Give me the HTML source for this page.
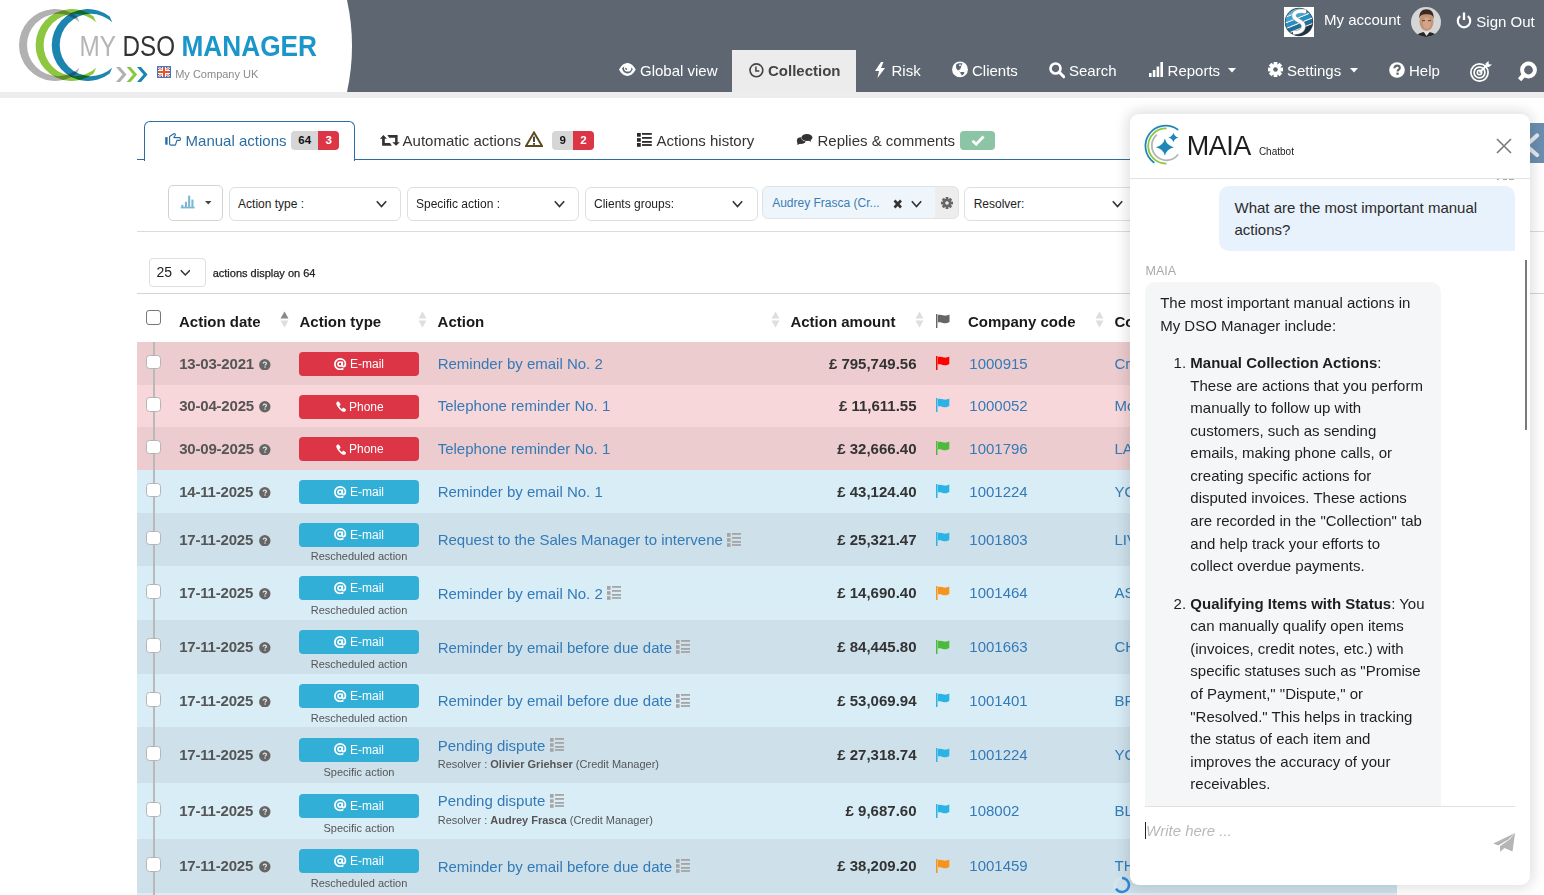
<!DOCTYPE html><html><head><meta charset="utf-8"><style>
html,body{margin:0;padding:0;width:1544px;height:895px;overflow:hidden;background:#fff;font-family:"Liberation Sans",sans-serif;}
.a{position:absolute;display:block;}
.t{position:absolute;white-space:nowrap;}
</style></head><body>
<div class="a" style="left:0.00px;top:0.00px;width:1544.00px;height:92.00px;background:#5e6771;"></div>
<svg class="a" style="left:0.00px;top:0.00px;" width="360" height="92" viewBox="0 0 360 92"><path d="M0 0 H347 Q357 46 347 92 H0 Z" fill="#fff"/></svg>
<div class="a" style="left:0.00px;top:92.00px;width:1544.00px;height:6.00px;background:#ededed;"></div>
<div class="a" style="left:732.00px;top:50.00px;width:124.00px;height:42.00px;background:#ececec;"></div>
<svg class="a" style="left:0.00px;top:0.00px;" width="340" height="92" viewBox="0 0 340 92"><path d="M77.00 16.50 A36 36 0 1 0 77.00 73.50 L79.50 67.71 A31.16 31.16 0 1 1 79.50 22.29 Z" fill="#b1b1b1" style="mix-blend-mode:multiply"/><path d="M93.60 16.50 A36 36 0 1 0 93.60 73.50 L96.10 67.71 A31.16 31.16 0 1 1 96.10 22.29 Z" fill="#8dc63f" style="mix-blend-mode:multiply"/><path d="M109.70 16.50 A36 36 0 1 0 109.70 73.50 L112.20 67.71 A31.16 31.16 0 1 1 112.20 22.29 Z" fill="#1b85b0" style="mix-blend-mode:multiply"/><path d="M116 67 L120 67 L126.5 74.5 L120 82 L116 82 L122.5 74.5 Z" fill="#b1b1b1"/><path d="M126.6 67 L130.6 67 L137.1 74.5 L130.6 82 L126.6 82 L133.1 74.5 Z" fill="#8dc63f"/><path d="M137 67 L141 67 L147.5 74.5 L141 82 L137 82 L143.5 74.5 Z" fill="#1b85b0"/><text x="79.5" y="56" font-family="Liberation Sans" font-size="29" fill="#b5b5b5" textLength="36.5" lengthAdjust="spacingAndGlyphs">MY</text><text x="122.5" y="56" font-family="Liberation Sans" font-size="29" fill="#333" textLength="52.5" lengthAdjust="spacingAndGlyphs">DSO</text><text x="181.5" y="56" font-family="Liberation Sans" font-size="29" font-weight="700" fill="#1b96c8" textLength="135.5" lengthAdjust="spacingAndGlyphs">MANAGER</text></svg>
<svg class="a" style="left:157.00px;top:66.00px;" width="14" height="12" viewBox="0 0 14 12"><rect width="14" height="12" fill="#2d5fb8"/><path d="M0 0L14 12M14 0L0 12" stroke="#fff" stroke-width="2.4"/><path d="M0 0L14 12M14 0L0 12" stroke="#e8542a" stroke-width="1"/><path d="M7 0V12M0 6H14" stroke="#fff" stroke-width="4"/><path d="M7 0V12M0 6H14" stroke="#e8542a" stroke-width="2"/><rect x="0.5" y="0.5" width="13" height="11" fill="none" stroke="#3a78c8" stroke-width="1"/></svg>
<div class="t" style="left:175.20px;top:67.19px;font-size:11px;line-height:14px;color:#8a8a8a;">My Company UK</div>
<svg class="a" style="left:614.00px;top:58.00px;" width="30" height="24" viewBox="0 0 30 24"><path d="M5 11.6 C7.4 7 10.4 5 13.3 5 C16.2 5 19.3 7 21.7 11.6 C19.3 16.2 16.2 18 13.3 18 C10.4 18 7.4 16.2 5 11.6 Z" fill="#fff"/><path d="M8 10.6 C9.5 8.6 11 8 13.3 8 C15.6 8 17.3 8.8 18.8 11.2 C17.6 14 15.6 15.5 13.3 15.5 C11 15.5 9 14 8 10.6 Z" fill="#5e6771"/><circle cx="13.7" cy="9.9" r="3.7" fill="#fff"/><ellipse cx="12.1" cy="10.9" rx="0.8" ry="1.2" fill="#5e6771" transform="rotate(-30 12.1 10.9)"/></svg>
<div class="t" style="left:640.00px;top:60.80px;font-size:15px;line-height:20px;color:#fff;">Global view</div>
<svg class="a" style="left:748.50px;top:62.50px;" width="15" height="15" viewBox="0 0 15 15"><circle cx="7.4" cy="7.3" r="6.4" fill="none" stroke="#444" stroke-width="1.6"/><path d="M6.9 3.6 V8 H10.3" fill="none" stroke="#444" stroke-width="1.5"/></svg>
<div class="t" style="left:768.00px;top:60.80px;font-size:15px;line-height:20px;color:#444;font-weight:700;">Collection</div>
<svg class="a" style="left:873.50px;top:62.00px;" width="12" height="16" viewBox="0 0 12 16"><path d="M7 0 L1 9 H5 L3.5 16 L11 6 H7 L9.5 0 Z" fill="#fff"/></svg>
<div class="t" style="left:891.50px;top:60.80px;font-size:15px;line-height:20px;color:#fff;">Risk</div>
<svg class="a" style="left:945.00px;top:58.00px;" width="30" height="24" viewBox="0 0 30 24"><circle cx="15" cy="11.4" r="7.9" fill="#fff"/><path d="M11.2 6.6 C12.5 5.4 14.5 5 17.6 5.4 C17.2 6.6 16.6 7.2 16.1 8.4 C15.8 9.6 15.6 10.8 14.9 11.6 C14.2 11.8 13.6 11.9 13.3 12.6 C12.6 12.2 11.4 11.2 11.1 9.8 C11 8.6 11 7.4 11.2 6.6 Z" fill="#5e6771"/><path d="M14 6.6 C15 6.4 16 6.6 16.8 6.9 C16 7.5 15.2 7.8 14.4 8.2 Z" fill="#fff"/><path d="M13.3 12.6 L14.6 13.6 L15.2 14.2 C16.8 14 18.4 14 19.6 14.4 C19.2 15.6 18.2 16.6 16.9 17.6 C16.2 16.6 15.8 15.6 15.3 14.8 Z" fill="#5e6771"/></svg>
<div class="t" style="left:972.00px;top:60.80px;font-size:15px;line-height:20px;color:#fff;">Clients</div>
<svg class="a" style="left:1049.00px;top:62.00px;" width="16" height="17" viewBox="0 0 16 17"><circle cx="6.5" cy="6.5" r="5" fill="none" stroke="#fff" stroke-width="2.6"/><path d="M10 10 L14.8 14.8" stroke="#fff" stroke-width="3" stroke-linecap="round"/></svg>
<div class="t" style="left:1069.00px;top:60.80px;font-size:15px;line-height:20px;color:#fff;">Search</div>
<svg class="a" style="left:1149.00px;top:62.00px;" width="14" height="15" viewBox="0 0 14 15"><rect x="0" y="11" width="2.6" height="4" fill="#fff"/><rect x="3.8" y="8" width="2.6" height="7" fill="#fff"/><rect x="7.6" y="4.5" width="2.6" height="10.5" fill="#fff"/><rect x="11.4" y="0" width="2.6" height="15" fill="#fff"/></svg>
<div class="t" style="left:1167.60px;top:60.80px;font-size:15px;line-height:20px;color:#fff;">Reports</div>
<svg class="a" style="left:1228.00px;top:68.20px;" width="8" height="5" viewBox="0 0 8 5"><path d="M0 0H8L4 4.5Z" fill="#fff"/></svg>
<svg class="a" style="left:1268.00px;top:61.60px;" width="15" height="15" viewBox="0 0 15 15"><g transform="translate(7.5 7.5)"><rect x="-1.9" y="-7.6" width="3.8" height="4" fill="#fff" transform="rotate(0)"/><rect x="-1.9" y="-7.6" width="3.8" height="4" fill="#fff" transform="rotate(45)"/><rect x="-1.9" y="-7.6" width="3.8" height="4" fill="#fff" transform="rotate(90)"/><rect x="-1.9" y="-7.6" width="3.8" height="4" fill="#fff" transform="rotate(135)"/><rect x="-1.9" y="-7.6" width="3.8" height="4" fill="#fff" transform="rotate(180)"/><rect x="-1.9" y="-7.6" width="3.8" height="4" fill="#fff" transform="rotate(225)"/><rect x="-1.9" y="-7.6" width="3.8" height="4" fill="#fff" transform="rotate(270)"/><rect x="-1.9" y="-7.6" width="3.8" height="4" fill="#fff" transform="rotate(315)"/><circle r="5.4" fill="#fff"/><circle r="2.3" fill="#5e6771"/></g></svg>
<div class="t" style="left:1287.00px;top:60.80px;font-size:15px;line-height:20px;color:#fff;">Settings</div>
<svg class="a" style="left:1349.50px;top:68.20px;" width="8" height="5" viewBox="0 0 8 5"><path d="M0 0H8L4 4.5Z" fill="#fff"/></svg>
<svg class="a" style="left:1389.00px;top:62.00px;" width="16" height="16" viewBox="0 0 16 16"><circle cx="8" cy="8" r="7.8" fill="#fff"/><path d="M5.4 6.2 C5.4 4.4 6.6 3.6 8.1 3.6 C9.7 3.6 10.8 4.6 10.8 5.9 C10.8 7.6 8.6 7.7 8.6 9.4" fill="none" stroke="#5e6771" stroke-width="2.1"/><rect x="7.4" y="10.6" width="2.3" height="2.2" fill="#5e6771"/></svg>
<div class="t" style="left:1409.00px;top:60.80px;font-size:15px;line-height:20px;color:#fff;">Help</div>
<svg class="a" style="left:1469.50px;top:61.00px;" width="22" height="21" viewBox="0 0 22 21"><circle cx="9.5" cy="11.5" r="8.6" fill="none" stroke="#fff" stroke-width="1.7"/><circle cx="9.5" cy="11.5" r="5.4" fill="none" stroke="#fff" stroke-width="1.7"/><circle cx="9.5" cy="11.5" r="2.2" fill="none" stroke="#fff" stroke-width="1.5"/><path d="M9.5 11.5 L18 3" stroke="#fff" stroke-width="1.8"/><path d="M15.5 2.5 L18.5 0 L18.8 3.2 L22 3.5 L19 6 L15.8 5.7 Z" fill="#fff"/></svg>
<svg class="a" style="left:1516.00px;top:60.00px;" width="23" height="23" viewBox="0 0 23 23"><circle cx="12.5" cy="10" r="6.4" fill="none" stroke="#fff" stroke-width="4"/><path d="M8 14.8 L3.6 19.8" stroke="#fff" stroke-width="4.4" stroke-linecap="butt"/></svg>
<svg class="a" style="left:1284.00px;top:7.00px;" width="30" height="30" viewBox="0 0 30 30"><rect width="30" height="30" fill="#fff"/><defs><clipPath id="cc"><circle cx="15" cy="15" r="13.4"/></clipPath></defs><circle cx="15" cy="15" r="14.2" fill="#3a3f45"/><g clip-path="url(#cc)"><g transform="rotate(-22 15 15)"><rect x="-10" y="-5" width="50" height="10" fill="#47b6e4"/><rect x="-10" y="5" width="50" height="1.3" fill="#eaf6fb"/><rect x="-10" y="6.3" width="50" height="4" fill="#34a6da"/><rect x="-10" y="10.3" width="50" height="1.3" fill="#eaf6fb"/><rect x="-10" y="11.6" width="50" height="4" fill="#2590c6"/><rect x="-10" y="15.6" width="50" height="1.3" fill="#eaf6fb"/><rect x="-10" y="16.9" width="50" height="4" fill="#1f6f9c"/><rect x="-10" y="20.9" width="50" height="1.3" fill="#eaf6fb"/><rect x="-10" y="22.2" width="50" height="20" fill="#1c3446"/></g></g><path d="M22 4.5 C15 3 9 5 10 9.5 C11 13.5 19.5 14 19.5 19 C19.5 23.5 15 26 9 25.5" fill="none" stroke="#9aa3aa" stroke-width="4.6"/><path d="M22 4.5 C15 3 9 5 10 9.5 C11 13.5 19.5 14 19.5 19 C19.5 23.5 15 26 9 25.5" fill="none" stroke="#fff" stroke-width="3.4"/></svg>
<div class="t" style="left:1324.00px;top:10.20px;font-size:15px;line-height:20px;color:#fff;">My account</div>
<svg class="a" style="left:1411.00px;top:7.00px;" width="30" height="30" viewBox="0 0 30 30"><defs><clipPath id="av"><circle cx="15" cy="15" r="15"/></clipPath></defs><g clip-path="url(#av)"><rect width="30" height="30" fill="#d6d6d6"/><path d="M5 30 C6 26.5 10 25 15.5 25 C21 25 25 26.5 26 30Z" fill="#262626"/><path d="M12.5 24.5 L15.5 29 L19 24.5Z" fill="#e6e6e6"/><ellipse cx="15.5" cy="14.5" rx="7" ry="9.5" fill="#c39478"/><ellipse cx="15.8" cy="16" rx="4" ry="6" fill="#d2a58a"/><path d="M8.3 12 C8 5 11 2.3 15.5 2.3 C20 2.3 23 5 22.7 12 C21.8 8.5 20.5 7.2 15.5 7.2 C10.5 7.2 9.2 8.5 8.3 12Z" fill="#3b2a22"/><rect x="11" y="13" width="3" height="1.2" fill="#6b4a3a"/><rect x="17" y="13" width="3" height="1.2" fill="#6b4a3a"/></g></svg>
<svg class="a" style="left:1456.00px;top:12.00px;" width="16" height="17" viewBox="0 0 16 17"><path d="M4.2 4.2 A6.2 6.2 0 1 0 11.8 4.2" fill="none" stroke="#fff" stroke-width="2.2"/><path d="M8 0.5 V8" stroke="#fff" stroke-width="2.4"/></svg>
<div class="t" style="left:1476.30px;top:12.20px;font-size:15px;line-height:20px;color:#fff;">Sign Out</div>
<div class="a" style="left:137.00px;top:159.00px;width:1407.00px;height:1.00px;background:#2e6da4;"></div>
<div class="a" style="left:144px;top:121px;width:209px;height:39px;border:1px solid #2e6da4;border-bottom:none;border-radius:6px 6px 0 0;background:#fff;"></div>
<svg class="a" style="left:161.00px;top:128.00px;" width="24" height="22" viewBox="0 0 24 22"><rect x="4.2" y="9.1" width="2.4" height="7.6" fill="#2e6da4"/><path d="M8.6 8.6 L13.2 5.6 C13.8 5.4 14.5 6 14.4 6.8 L12.9 9.6 H18.6 C19.7 9.6 19.7 12.3 18.6 12.3 H15.9 L14.4 17.1 H9.9 C9.1 17.1 8.6 16.5 8.6 15.7 Z" fill="none" stroke="#2e6da4" stroke-width="1.15" stroke-linejoin="round"/></svg>
<div class="t" style="left:185.60px;top:130.55px;font-size:15px;line-height:20px;color:#2e6da4;">Manual actions</div>
<div class="a" style="left:291px;top:131px;width:27px;height:19px;background:#d6d6d6;border-radius:4px 0 0 4px;"></div>
<div class="a" style="left:318px;top:131px;width:21px;height:19px;background:#dc3545;border-radius:0 4px 4px 0;"></div>
<div class="t" style="left:298.30px;top:133.32px;font-size:11.5px;line-height:15px;color:#111;font-weight:700;">64</div>
<div class="t" style="left:325.40px;top:133.32px;font-size:11.5px;line-height:15px;color:#fff;font-weight:700;">3</div>
<svg class="a" style="left:376.00px;top:128.00px;" width="28" height="22" viewBox="0 0 28 22"><path d="M3.9 10.7 L7.4 6.9 L10.9 10.7 H8.8 V15 H14 L15.9 17.7 H6.1 V10.7 Z" fill="#333"/><path d="M11.3 7.1 H21.6 V14.3 H23.8 L20.1 17.7 L16.2 14.3 H19.1 V9.8 H13.2 Z" fill="#333"/></svg>
<div class="t" style="left:402.60px;top:130.55px;font-size:15px;line-height:20px;color:#333;">Automatic actions</div>
<svg class="a" style="left:525.00px;top:131.00px;" width="18" height="16" viewBox="0 0 18 16"><path d="M9 1.5 L17 15 H1 Z" fill="#fff" stroke="#5a4a1c" stroke-width="1.9" stroke-linejoin="miter"/><rect x="8.1" y="5.6" width="1.8" height="5.4" fill="#333"/><rect x="8.1" y="12" width="1.8" height="1.8" fill="#333"/></svg>
<div class="a" style="left:552px;top:131px;width:21px;height:19px;background:#d6d6d6;border-radius:4px 0 0 4px;"></div>
<div class="a" style="left:573px;top:131px;width:21px;height:19px;background:#dc3545;border-radius:0 4px 4px 0;"></div>
<div class="t" style="left:559.50px;top:133.32px;font-size:11.5px;line-height:15px;color:#111;font-weight:700;">9</div>
<div class="t" style="left:580.30px;top:133.32px;font-size:11.5px;line-height:15px;color:#fff;font-weight:700;">2</div>
<svg class="a" style="left:637.00px;top:133.00px;" width="15" height="14" viewBox="0 0 15 14"><rect x="0" y="0" width="3.8" height="3.7" fill="#2a2a2a"/><rect x="0" y="5.1" width="3.8" height="3.7" fill="#2a2a2a"/><rect x="0" y="10" width="3.8" height="3.8" fill="#2a2a2a"/><rect x="5" y="0" width="9.8" height="1.8" fill="#2a2a2a"/><rect x="5" y="4" width="9.8" height="1.8" fill="#2a2a2a"/><rect x="5" y="8" width="9.8" height="1.8" fill="#2a2a2a"/><rect x="5" y="11.1" width="9.8" height="1.8" fill="#2a2a2a"/></svg>
<div class="t" style="left:656.60px;top:130.55px;font-size:15px;line-height:20px;color:#333;">Actions history</div>
<svg class="a" style="left:793.00px;top:128.00px;" width="24" height="22" viewBox="0 0 24 22"><ellipse cx="8.3" cy="12.6" rx="4.4" ry="3.3" fill="#333"/><path d="M4.4 13.2 L4.4 17 L8 15.2 Z" fill="#333"/><ellipse cx="13.9" cy="9.5" rx="5.9" ry="4" fill="#fff"/><ellipse cx="13.9" cy="9.5" rx="5.5" ry="3.6" fill="#333"/><path d="M15.5 12.2 L17.6 14 L17.8 11.5 Z" fill="#333"/></svg>
<div class="t" style="left:817.50px;top:130.55px;font-size:15px;line-height:20px;color:#333;">Replies &amp; comments</div>
<div class="a" style="left:960px;top:131px;width:35px;height:18.5px;background:#8cc5a5;border-radius:4px;"></div>
<svg class="a" style="left:970.50px;top:135.00px;" width="14" height="11" viewBox="0 0 14 11"><path d="M1.5 5.8 L5.2 9.2 L12.6 1.6" fill="none" stroke="#fff" stroke-width="2.8"/></svg>
<div class="a" style="left:168.2px;top:185.3px;width:52.4px;height:33.5px;border:1px solid #d2d2d2;border-radius:5px;background:#fff;"></div>
<svg class="a" style="left:180.00px;top:194.50px;" width="16" height="14" viewBox="0 0 16 14"><rect x="1.3" y="9.8" width="2.1" height="2.6" fill="#7db7d2"/><rect x="4.9" y="6.8" width="2.1" height="5.6" fill="#7db7d2"/><rect x="8.1" y="0.6" width="2.1" height="11.8" fill="#7db7d2"/><rect x="11.4" y="4.6" width="2.1" height="7.8" fill="#7db7d2"/><rect x="0.7" y="11.8" width="14" height="1.6" fill="#7db7d2"/></svg>
<svg class="a" style="left:205.00px;top:201.00px;" width="6.5" height="3.5" viewBox="0 0 6.5 3.5"><path d="M0 0H6.5L3.25 3.5Z" fill="#444"/></svg>
<div class="a" style="left:228.6px;top:187.2px;width:170.8px;height:31.4px;border:1px solid #dcdfe3;border-radius:6px;background:#fff;"></div>
<div class="t" style="left:238.10px;top:195.64px;font-size:12px;line-height:16px;color:#222;">Action type :</div>
<svg class="a" style="left:375.60px;top:200.00px;" width="11" height="8.5" viewBox="0 0 11 8.5"><path d="M0.8 1.2 L5.5 6.5 L10.2 1.2" fill="none" stroke="#333" stroke-width="1.6"/></svg>
<div class="a" style="left:406.5px;top:187.2px;width:170.7px;height:31.4px;border:1px solid #dcdfe3;border-radius:6px;background:#fff;"></div>
<div class="t" style="left:416.00px;top:195.64px;font-size:12px;line-height:16px;color:#222;">Specific action :</div>
<svg class="a" style="left:553.80px;top:200.00px;" width="11" height="8.5" viewBox="0 0 11 8.5"><path d="M0.8 1.2 L5.5 6.5 L10.2 1.2" fill="none" stroke="#333" stroke-width="1.6"/></svg>
<div class="a" style="left:584.5px;top:187.2px;width:171.3px;height:31.4px;border:1px solid #dcdfe3;border-radius:6px;background:#fff;"></div>
<div class="t" style="left:594.00px;top:195.64px;font-size:12px;line-height:16px;color:#222;">Clients groups:</div>
<svg class="a" style="left:732.40px;top:200.00px;" width="11" height="8.5" viewBox="0 0 11 8.5"><path d="M0.8 1.2 L5.5 6.5 L10.2 1.2" fill="none" stroke="#333" stroke-width="1.6"/></svg>
<div class="a" style="left:762.4px;top:186.2px;width:194.4px;height:31.2px;border:1px solid #dfe3e7;border-radius:6px;background:#ededed;"></div>
<div class="a" style="left:763.4px;top:187.2px;width:171.3px;height:31.2px;border-radius:5px 0 0 5px;background:#eef6fb;"></div>
<div class="t" style="left:772.20px;top:195.14px;font-size:12px;line-height:16px;color:#3a7db5;">Audrey Frasca (Cr...</div>
<svg class="a" style="left:892.50px;top:198.50px;" width="9.5" height="10" viewBox="0 0 9.5 10"><path d="M1.5 1.5 L8 8.5 M8 1.5 L1.5 8.5" stroke="#333" stroke-width="2.6"/></svg>
<svg class="a" style="left:910.50px;top:199.50px;" width="11" height="8.5" viewBox="0 0 11 8.5"><path d="M0.8 1.2 L5.5 6.5 L10.2 1.2" fill="none" stroke="#333" stroke-width="1.6"/></svg>
<svg class="a" style="left:940.50px;top:196.70px;" width="12" height="12" viewBox="0 0 12 12"><g transform="translate(6 6)"><rect x="-1.4" y="-6" width="2.8" height="3" fill="#666" transform="rotate(0)"/><rect x="-1.4" y="-6" width="2.8" height="3" fill="#666" transform="rotate(45)"/><rect x="-1.4" y="-6" width="2.8" height="3" fill="#666" transform="rotate(90)"/><rect x="-1.4" y="-6" width="2.8" height="3" fill="#666" transform="rotate(135)"/><rect x="-1.4" y="-6" width="2.8" height="3" fill="#666" transform="rotate(180)"/><rect x="-1.4" y="-6" width="2.8" height="3" fill="#666" transform="rotate(225)"/><rect x="-1.4" y="-6" width="2.8" height="3" fill="#666" transform="rotate(270)"/><rect x="-1.4" y="-6" width="2.8" height="3" fill="#666" transform="rotate(315)"/><circle r="4.2" fill="#666"/><circle r="1.8" fill="#ededed"/></g></svg>
<div class="a" style="left:964.2px;top:187.4px;width:188px;height:31.200000000000003px;border:1px solid #dcdfe3;border-radius:6px;background:#fff;"></div>
<div class="t" style="left:973.70px;top:195.64px;font-size:12px;line-height:16px;color:#222;">Resolver:</div>
<svg class="a" style="left:1111.80px;top:200.00px;" width="11" height="8.5" viewBox="0 0 11 8.5"><path d="M0.8 1.2 L5.5 6.5 L10.2 1.2" fill="none" stroke="#333" stroke-width="1.6"/></svg>
<div class="a" style="left:137.00px;top:231.00px;width:1407.00px;height:1.20px;background:#dcdcdc;"></div>
<div class="a" style="left:148.6px;top:258px;width:55px;height:26.7px;border:1px solid #dcdfe3;border-radius:4px;background:#fff;"></div>
<div class="t" style="left:156.40px;top:262.85px;font-size:14px;line-height:18px;color:#222;">25</div>
<svg class="a" style="left:179.70px;top:268.50px;" width="10.7" height="8" viewBox="0 0 10.7 8"><path d="M0.8 1.2 L5.35 6 L9.899999999999999 1.2" fill="none" stroke="#333" stroke-width="1.5"/></svg>
<div class="t" style="left:212.70px;top:265.89px;font-size:11px;line-height:14px;color:#222;-webkit-text-stroke:0.25px #222;">actions display on 64</div>
<div class="a" style="left:137.00px;top:293.00px;width:1407.00px;height:1.20px;background:#d5d5d5;"></div>
<div class="a" style="left:146.4px;top:310.4px;width:12.6px;height:12.6px;border:1px solid #767676;border-radius:3px;background:#fff;"></div>
<div class="t" style="left:179.00px;top:311.80px;font-size:15px;line-height:20px;color:#1a1a1a;font-weight:700;">Action date</div>
<svg class="a" style="left:280.00px;top:311.00px;" width="9" height="17" viewBox="0 0 9 17"><path d="M0.5 7.5 L4.5 0.5 L8.5 7.5Z" fill="#8a8a8a"/><path d="M0.5 9.5 L4.5 16.5 L8.5 9.5Z" fill="#dedede"/></svg>
<div class="t" style="left:299.50px;top:311.80px;font-size:15px;line-height:20px;color:#1a1a1a;font-weight:700;">Action type</div>
<svg class="a" style="left:418.00px;top:311.00px;" width="9" height="17" viewBox="0 0 9 17"><path d="M0.5 7.5 L4.5 0.5 L8.5 7.5Z" fill="#dedede"/><path d="M0.5 9.5 L4.5 16.5 L8.5 9.5Z" fill="#dedede"/></svg>
<div class="t" style="left:437.60px;top:311.80px;font-size:15px;line-height:20px;color:#1a1a1a;font-weight:700;">Action</div>
<svg class="a" style="left:771.00px;top:311.00px;" width="9" height="17" viewBox="0 0 9 17"><path d="M0.5 7.5 L4.5 0.5 L8.5 7.5Z" fill="#dedede"/><path d="M0.5 9.5 L4.5 16.5 L8.5 9.5Z" fill="#dedede"/></svg>
<div class="t" style="left:790.40px;top:311.80px;font-size:15px;line-height:20px;color:#1a1a1a;font-weight:700;">Action amount</div>
<svg class="a" style="left:915.40px;top:311.00px;" width="9" height="17" viewBox="0 0 9 17"><path d="M0.5 7.5 L4.5 0.5 L8.5 7.5Z" fill="#dedede"/><path d="M0.5 9.5 L4.5 16.5 L8.5 9.5Z" fill="#dedede"/></svg>
<svg class="a" style="left:935.50px;top:314.00px;" width="14" height="14" viewBox="0 0 14 14"><rect x="0" y="0" width="1.4" height="14" fill="#666"/><path d="M1.8 1.2 C4 0 6 1.2 8 1.6 C10 2 11.5 1.2 13.5 0.6 V8 C11.5 8.8 10 9.6 8 9.2 C6 8.8 4 7.6 1.8 8.6 Z" fill="#666"/></svg>
<div class="t" style="left:968.00px;top:311.80px;font-size:15px;line-height:20px;color:#1a1a1a;font-weight:700;">Company code</div>
<svg class="a" style="left:1095.00px;top:311.00px;" width="9" height="17" viewBox="0 0 9 17"><path d="M0.5 7.5 L4.5 0.5 L8.5 7.5Z" fill="#dedede"/><path d="M0.5 9.5 L4.5 16.5 L8.5 9.5Z" fill="#dedede"/></svg>
<div class="t" style="left:1114.50px;top:311.80px;font-size:15px;line-height:20px;color:#1a1a1a;font-weight:700;">Company name</div>
<div class="a" style="left:137.00px;top:342.20px;width:1260.00px;height:42.40px;background:#eccccf;"></div>
<div class="a" style="left:137.00px;top:384.60px;width:1260.00px;height:42.40px;background:#f8d7da;"></div>
<div class="a" style="left:137.00px;top:427.00px;width:1260.00px;height:42.70px;background:#eccccf;"></div>
<div class="a" style="left:137.00px;top:469.70px;width:1260.00px;height:43.00px;background:#d9edf7;"></div>
<div class="a" style="left:137.00px;top:512.70px;width:1260.00px;height:53.40px;background:#cee1eb;"></div>
<div class="a" style="left:137.00px;top:566.10px;width:1260.00px;height:53.90px;background:#d9edf7;"></div>
<div class="a" style="left:137.00px;top:620.00px;width:1260.00px;height:54.00px;background:#cee1eb;"></div>
<div class="a" style="left:137.00px;top:674.00px;width:1260.00px;height:53.20px;background:#d9edf7;"></div>
<div class="a" style="left:137.00px;top:727.20px;width:1260.00px;height:55.70px;background:#cee1eb;"></div>
<div class="a" style="left:137.00px;top:782.90px;width:1260.00px;height:56.20px;background:#d9edf7;"></div>
<div class="a" style="left:137.00px;top:839.10px;width:1260.00px;height:53.60px;background:#cee1eb;"></div>
<div class="a" style="left:137.00px;top:892.70px;width:1260.00px;height:50.00px;background:#d9edf7;"></div>
<div class="a" style="left:153.20px;top:342.20px;width:1.80px;height:552.80px;background:#b9b9b9;"></div>
<div class="a" style="left:146.2px;top:354.80px;width:12.6px;height:12.6px;border:1px solid #b5b5b5;border-radius:3.5px;background:#fff;"></div>
<div class="t" style="left:179.20px;top:353.70px;font-size:15px;line-height:20px;color:#555;font-weight:700;letter-spacing:-0.2px;">13-03-2021</div>
<svg class="a" style="left:259.20px;top:358.70px;" width="11.6" height="11.6" viewBox="0 0 11.6 11.6"><circle cx="5.8" cy="5.8" r="5.7" fill="#666"/><path d="M4.2 4.6 C4.2 3.7 4.9 3.2 5.8 3.2 C6.8 3.2 7.4 3.8 7.4 4.5 C7.4 5.5 6.1 5.6 6.1 6.6" fill="none" stroke="#e8e8e8" stroke-width="1.2"/><rect x="5.4" y="7.4" width="1.3" height="1.3" fill="#e8e8e8"/></svg>
<div class="a" style="left:299px;top:352.10px;width:120px;height:24px;background:#dc3545;border-radius:4px;"></div>
<svg class="a" style="left:334.20px;top:357.70px;" width="12.5" height="12.5" viewBox="0 0 12.5 12.5"><path d="M9.4 10.6 C8.4 11.2 7.3 11.4 6.2 11.4 C3.2 11.4 0.9 9.1 0.9 6.2 C0.9 3.2 3.2 0.9 6.2 0.9 C9.2 0.9 11.4 3 11.4 5.8 C11.4 7.4 10.7 8.6 9.5 8.6 C8.6 8.6 8.3 8 8.3 7.2 V3.6" fill="none" stroke="#fff" stroke-width="1.7"/><circle cx="6.1" cy="6.1" r="2.1" fill="none" stroke="#fff" stroke-width="1.7"/></svg>
<div class="t" style="left:350.00px;top:356.24px;font-size:12px;line-height:16px;color:#fff;">E-mail</div>
<div class="t" style="left:437.70px;top:353.80px;font-size:15px;line-height:20px;color:#337ab7;">Reminder by email No. 2</div>
<div class="t" style="left:716.50px;width:200px;text-align:right;top:353.80px;font-size:15px;line-height:20px;color:#333;font-weight:700;">£ 795,749.56</div>
<svg class="a" style="left:935.70px;top:356.00px;" width="14" height="14" viewBox="0 0 14 14"><rect x="0" y="0" width="1.5" height="14" fill="#ff0000"/><path d="M1.9 1.2 C4 0 6 1.2 8 1.6 C10 2 11.5 1.2 13.3 0.6 V8 C11.5 8.8 10 9.6 8 9.2 C6 8.8 4 7.6 1.9 8.6 Z" fill="#ff0000"/></svg>
<div class="t" style="left:969.30px;top:353.80px;font-size:15px;line-height:20px;color:#337ab7;">1000915</div>
<div class="t" style="left:1114.50px;top:353.80px;font-size:15px;line-height:20px;color:#337ab7;">CrMPANY LTD</div>
<div class="a" style="left:146.2px;top:397.20px;width:12.6px;height:12.6px;border:1px solid #b5b5b5;border-radius:3.5px;background:#fff;"></div>
<div class="t" style="left:179.20px;top:396.10px;font-size:15px;line-height:20px;color:#555;font-weight:700;letter-spacing:-0.2px;">30-04-2025</div>
<svg class="a" style="left:259.20px;top:401.10px;" width="11.6" height="11.6" viewBox="0 0 11.6 11.6"><circle cx="5.8" cy="5.8" r="5.7" fill="#666"/><path d="M4.2 4.6 C4.2 3.7 4.9 3.2 5.8 3.2 C6.8 3.2 7.4 3.8 7.4 4.5 C7.4 5.5 6.1 5.6 6.1 6.6" fill="none" stroke="#e8e8e8" stroke-width="1.2"/><rect x="5.4" y="7.4" width="1.3" height="1.3" fill="#e8e8e8"/></svg>
<div class="a" style="left:299px;top:394.50px;width:120px;height:24px;background:#dc3545;border-radius:4px;"></div>
<svg class="a" style="left:335.50px;top:401.00px;" width="10" height="11" viewBox="0 0 10 11"><path d="M1.2 0.8 C2 0.3 2.8 0.4 3.2 1 L4.4 3 C4.7 3.6 4.5 4.1 4 4.5 L3.3 5 C3.9 6.4 4.7 7.3 6 8 L6.6 7.3 C7 6.8 7.6 6.7 8.1 7 L9.7 8.3 C10.1 8.7 10 9.5 9.6 9.9 C8.8 10.8 7.6 11.1 6.4 10.4 C3.6 8.8 1.6 6.4 0.5 3.6 C0.1 2.4 0.3 1.4 1.2 0.8Z" fill="#fff"/></svg>
<div class="t" style="left:349.00px;top:398.64px;font-size:12px;line-height:16px;color:#fff;">Phone</div>
<div class="t" style="left:437.70px;top:396.20px;font-size:15px;line-height:20px;color:#337ab7;">Telephone reminder No. 1</div>
<div class="t" style="left:716.50px;width:200px;text-align:right;top:396.20px;font-size:15px;line-height:20px;color:#333;font-weight:700;">£ 11,611.55</div>
<svg class="a" style="left:935.70px;top:398.40px;" width="14" height="14" viewBox="0 0 14 14"><rect x="0" y="0" width="1.5" height="14" fill="#2bb3e6"/><path d="M1.9 1.2 C4 0 6 1.2 8 1.6 C10 2 11.5 1.2 13.3 0.6 V8 C11.5 8.8 10 9.6 8 9.2 C6 8.8 4 7.6 1.9 8.6 Z" fill="#2bb3e6"/></svg>
<div class="t" style="left:969.30px;top:396.20px;font-size:15px;line-height:20px;color:#337ab7;">1000052</div>
<div class="t" style="left:1114.50px;top:396.20px;font-size:15px;line-height:20px;color:#337ab7;">MoMPANY LTD</div>
<div class="a" style="left:146.2px;top:439.75px;width:12.6px;height:12.6px;border:1px solid #b5b5b5;border-radius:3.5px;background:#fff;"></div>
<div class="t" style="left:179.20px;top:438.65px;font-size:15px;line-height:20px;color:#555;font-weight:700;letter-spacing:-0.2px;">30-09-2025</div>
<svg class="a" style="left:259.20px;top:443.65px;" width="11.6" height="11.6" viewBox="0 0 11.6 11.6"><circle cx="5.8" cy="5.8" r="5.7" fill="#666"/><path d="M4.2 4.6 C4.2 3.7 4.9 3.2 5.8 3.2 C6.8 3.2 7.4 3.8 7.4 4.5 C7.4 5.5 6.1 5.6 6.1 6.6" fill="none" stroke="#e8e8e8" stroke-width="1.2"/><rect x="5.4" y="7.4" width="1.3" height="1.3" fill="#e8e8e8"/></svg>
<div class="a" style="left:299px;top:437.05px;width:120px;height:24px;background:#dc3545;border-radius:4px;"></div>
<svg class="a" style="left:335.50px;top:443.55px;" width="10" height="11" viewBox="0 0 10 11"><path d="M1.2 0.8 C2 0.3 2.8 0.4 3.2 1 L4.4 3 C4.7 3.6 4.5 4.1 4 4.5 L3.3 5 C3.9 6.4 4.7 7.3 6 8 L6.6 7.3 C7 6.8 7.6 6.7 8.1 7 L9.7 8.3 C10.1 8.7 10 9.5 9.6 9.9 C8.8 10.8 7.6 11.1 6.4 10.4 C3.6 8.8 1.6 6.4 0.5 3.6 C0.1 2.4 0.3 1.4 1.2 0.8Z" fill="#fff"/></svg>
<div class="t" style="left:349.00px;top:441.19px;font-size:12px;line-height:16px;color:#fff;">Phone</div>
<div class="t" style="left:437.70px;top:438.75px;font-size:15px;line-height:20px;color:#337ab7;">Telephone reminder No. 1</div>
<div class="t" style="left:716.50px;width:200px;text-align:right;top:438.75px;font-size:15px;line-height:20px;color:#333;font-weight:700;">£ 32,666.40</div>
<svg class="a" style="left:935.70px;top:440.95px;" width="14" height="14" viewBox="0 0 14 14"><rect x="0" y="0" width="1.5" height="14" fill="#4cbb3c"/><path d="M1.9 1.2 C4 0 6 1.2 8 1.6 C10 2 11.5 1.2 13.3 0.6 V8 C11.5 8.8 10 9.6 8 9.2 C6 8.8 4 7.6 1.9 8.6 Z" fill="#4cbb3c"/></svg>
<div class="t" style="left:969.30px;top:438.75px;font-size:15px;line-height:20px;color:#337ab7;">1001796</div>
<div class="t" style="left:1114.50px;top:438.75px;font-size:15px;line-height:20px;color:#337ab7;">LAMPANY LTD</div>
<div class="a" style="left:146.2px;top:482.60px;width:12.6px;height:12.6px;border:1px solid #b5b5b5;border-radius:3.5px;background:#fff;"></div>
<div class="t" style="left:179.20px;top:481.50px;font-size:15px;line-height:20px;color:#555;font-weight:700;letter-spacing:-0.2px;">14-11-2025</div>
<svg class="a" style="left:259.20px;top:486.50px;" width="11.6" height="11.6" viewBox="0 0 11.6 11.6"><circle cx="5.8" cy="5.8" r="5.7" fill="#666"/><path d="M4.2 4.6 C4.2 3.7 4.9 3.2 5.8 3.2 C6.8 3.2 7.4 3.8 7.4 4.5 C7.4 5.5 6.1 5.6 6.1 6.6" fill="none" stroke="#e8e8e8" stroke-width="1.2"/><rect x="5.4" y="7.4" width="1.3" height="1.3" fill="#e8e8e8"/></svg>
<div class="a" style="left:299px;top:479.90px;width:120px;height:24px;background:#31afd7;border-radius:4px;"></div>
<svg class="a" style="left:334.20px;top:485.50px;" width="12.5" height="12.5" viewBox="0 0 12.5 12.5"><path d="M9.4 10.6 C8.4 11.2 7.3 11.4 6.2 11.4 C3.2 11.4 0.9 9.1 0.9 6.2 C0.9 3.2 3.2 0.9 6.2 0.9 C9.2 0.9 11.4 3 11.4 5.8 C11.4 7.4 10.7 8.6 9.5 8.6 C8.6 8.6 8.3 8 8.3 7.2 V3.6" fill="none" stroke="#fff" stroke-width="1.7"/><circle cx="6.1" cy="6.1" r="2.1" fill="none" stroke="#fff" stroke-width="1.7"/></svg>
<div class="t" style="left:350.00px;top:484.04px;font-size:12px;line-height:16px;color:#fff;">E-mail</div>
<div class="t" style="left:437.70px;top:481.60px;font-size:15px;line-height:20px;color:#337ab7;">Reminder by email No. 1</div>
<div class="t" style="left:716.50px;width:200px;text-align:right;top:481.60px;font-size:15px;line-height:20px;color:#333;font-weight:700;">£ 43,124.40</div>
<svg class="a" style="left:935.70px;top:483.80px;" width="14" height="14" viewBox="0 0 14 14"><rect x="0" y="0" width="1.5" height="14" fill="#2bb3e6"/><path d="M1.9 1.2 C4 0 6 1.2 8 1.6 C10 2 11.5 1.2 13.3 0.6 V8 C11.5 8.8 10 9.6 8 9.2 C6 8.8 4 7.6 1.9 8.6 Z" fill="#2bb3e6"/></svg>
<div class="t" style="left:969.30px;top:481.60px;font-size:15px;line-height:20px;color:#337ab7;">1001224</div>
<div class="t" style="left:1114.50px;top:481.60px;font-size:15px;line-height:20px;color:#337ab7;">YOMPANY LTD</div>
<div class="a" style="left:146.2px;top:530.80px;width:12.6px;height:12.6px;border:1px solid #b5b5b5;border-radius:3.5px;background:#fff;"></div>
<div class="t" style="left:179.20px;top:529.70px;font-size:15px;line-height:20px;color:#555;font-weight:700;letter-spacing:-0.2px;">17-11-2025</div>
<svg class="a" style="left:259.20px;top:534.70px;" width="11.6" height="11.6" viewBox="0 0 11.6 11.6"><circle cx="5.8" cy="5.8" r="5.7" fill="#666"/><path d="M4.2 4.6 C4.2 3.7 4.9 3.2 5.8 3.2 C6.8 3.2 7.4 3.8 7.4 4.5 C7.4 5.5 6.1 5.6 6.1 6.6" fill="none" stroke="#e8e8e8" stroke-width="1.2"/><rect x="5.4" y="7.4" width="1.3" height="1.3" fill="#e8e8e8"/></svg>
<div class="a" style="left:299px;top:522.80px;width:120px;height:24px;background:#31afd7;border-radius:4px;"></div>
<svg class="a" style="left:334.20px;top:528.40px;" width="12.5" height="12.5" viewBox="0 0 12.5 12.5"><path d="M9.4 10.6 C8.4 11.2 7.3 11.4 6.2 11.4 C3.2 11.4 0.9 9.1 0.9 6.2 C0.9 3.2 3.2 0.9 6.2 0.9 C9.2 0.9 11.4 3 11.4 5.8 C11.4 7.4 10.7 8.6 9.5 8.6 C8.6 8.6 8.3 8 8.3 7.2 V3.6" fill="none" stroke="#fff" stroke-width="1.7"/><circle cx="6.1" cy="6.1" r="2.1" fill="none" stroke="#fff" stroke-width="1.7"/></svg>
<div class="t" style="left:350.00px;top:526.94px;font-size:12px;line-height:16px;color:#fff;">E-mail</div>
<div class="t" style="left:209.00px;width:300px;text-align:center;top:549.39px;font-size:11px;line-height:14px;color:#555;">Rescheduled action</div>
<div class="t" style="left:437.70px;top:530.20px;font-size:15px;line-height:20px;color:#337ab7;">Request to the Sales Manager to intervene</div>
<svg class="a" style="left:727.20px;top:532.80px;" width="14" height="14" viewBox="0 0 14 14"><rect x="0" y="0" width="3.6" height="3.8" fill="#a5a5a5"/><rect x="0" y="5.2" width="3.6" height="3.6" fill="#a5a5a5"/><rect x="0" y="10.2" width="3.6" height="3.6" fill="#a5a5a5"/><rect x="5" y="0" width="9" height="1.8" fill="#a5a5a5"/><rect x="5" y="4" width="9" height="1.8" fill="#a5a5a5"/><rect x="5" y="8" width="9" height="1.8" fill="#a5a5a5"/><rect x="5" y="11.1" width="9" height="1.8" fill="#a5a5a5"/></svg>
<div class="t" style="left:716.50px;width:200px;text-align:right;top:529.80px;font-size:15px;line-height:20px;color:#333;font-weight:700;">£ 25,321.47</div>
<svg class="a" style="left:935.70px;top:532.00px;" width="14" height="14" viewBox="0 0 14 14"><rect x="0" y="0" width="1.5" height="14" fill="#2bb3e6"/><path d="M1.9 1.2 C4 0 6 1.2 8 1.6 C10 2 11.5 1.2 13.3 0.6 V8 C11.5 8.8 10 9.6 8 9.2 C6 8.8 4 7.6 1.9 8.6 Z" fill="#2bb3e6"/></svg>
<div class="t" style="left:969.30px;top:529.80px;font-size:15px;line-height:20px;color:#337ab7;">1001803</div>
<div class="t" style="left:1114.50px;top:529.80px;font-size:15px;line-height:20px;color:#337ab7;">LIVMPANY LTD</div>
<div class="a" style="left:146.2px;top:584.45px;width:12.6px;height:12.6px;border:1px solid #b5b5b5;border-radius:3.5px;background:#fff;"></div>
<div class="t" style="left:179.20px;top:583.35px;font-size:15px;line-height:20px;color:#555;font-weight:700;letter-spacing:-0.2px;">17-11-2025</div>
<svg class="a" style="left:259.20px;top:588.35px;" width="11.6" height="11.6" viewBox="0 0 11.6 11.6"><circle cx="5.8" cy="5.8" r="5.7" fill="#666"/><path d="M4.2 4.6 C4.2 3.7 4.9 3.2 5.8 3.2 C6.8 3.2 7.4 3.8 7.4 4.5 C7.4 5.5 6.1 5.6 6.1 6.6" fill="none" stroke="#e8e8e8" stroke-width="1.2"/><rect x="5.4" y="7.4" width="1.3" height="1.3" fill="#e8e8e8"/></svg>
<div class="a" style="left:299px;top:576.20px;width:120px;height:24px;background:#31afd7;border-radius:4px;"></div>
<svg class="a" style="left:334.20px;top:581.80px;" width="12.5" height="12.5" viewBox="0 0 12.5 12.5"><path d="M9.4 10.6 C8.4 11.2 7.3 11.4 6.2 11.4 C3.2 11.4 0.9 9.1 0.9 6.2 C0.9 3.2 3.2 0.9 6.2 0.9 C9.2 0.9 11.4 3 11.4 5.8 C11.4 7.4 10.7 8.6 9.5 8.6 C8.6 8.6 8.3 8 8.3 7.2 V3.6" fill="none" stroke="#fff" stroke-width="1.7"/><circle cx="6.1" cy="6.1" r="2.1" fill="none" stroke="#fff" stroke-width="1.7"/></svg>
<div class="t" style="left:350.00px;top:580.34px;font-size:12px;line-height:16px;color:#fff;">E-mail</div>
<div class="t" style="left:209.00px;width:300px;text-align:center;top:602.79px;font-size:11px;line-height:14px;color:#555;">Rescheduled action</div>
<div class="t" style="left:437.70px;top:583.85px;font-size:15px;line-height:20px;color:#337ab7;">Reminder by email No. 2</div>
<svg class="a" style="left:607.10px;top:586.45px;" width="14" height="14" viewBox="0 0 14 14"><rect x="0" y="0" width="3.6" height="3.8" fill="#a5a5a5"/><rect x="0" y="5.2" width="3.6" height="3.6" fill="#a5a5a5"/><rect x="0" y="10.2" width="3.6" height="3.6" fill="#a5a5a5"/><rect x="5" y="0" width="9" height="1.8" fill="#a5a5a5"/><rect x="5" y="4" width="9" height="1.8" fill="#a5a5a5"/><rect x="5" y="8" width="9" height="1.8" fill="#a5a5a5"/><rect x="5" y="11.1" width="9" height="1.8" fill="#a5a5a5"/></svg>
<div class="t" style="left:716.50px;width:200px;text-align:right;top:583.45px;font-size:15px;line-height:20px;color:#333;font-weight:700;">£ 14,690.40</div>
<svg class="a" style="left:935.70px;top:585.65px;" width="14" height="14" viewBox="0 0 14 14"><rect x="0" y="0" width="1.5" height="14" fill="#f7941d"/><path d="M1.9 1.2 C4 0 6 1.2 8 1.6 C10 2 11.5 1.2 13.3 0.6 V8 C11.5 8.8 10 9.6 8 9.2 C6 8.8 4 7.6 1.9 8.6 Z" fill="#f7941d"/></svg>
<div class="t" style="left:969.30px;top:583.45px;font-size:15px;line-height:20px;color:#337ab7;">1001464</div>
<div class="t" style="left:1114.50px;top:583.45px;font-size:15px;line-height:20px;color:#337ab7;">ASMPANY LTD</div>
<div class="a" style="left:146.2px;top:638.40px;width:12.6px;height:12.6px;border:1px solid #b5b5b5;border-radius:3.5px;background:#fff;"></div>
<div class="t" style="left:179.20px;top:637.30px;font-size:15px;line-height:20px;color:#555;font-weight:700;letter-spacing:-0.2px;">17-11-2025</div>
<svg class="a" style="left:259.20px;top:642.30px;" width="11.6" height="11.6" viewBox="0 0 11.6 11.6"><circle cx="5.8" cy="5.8" r="5.7" fill="#666"/><path d="M4.2 4.6 C4.2 3.7 4.9 3.2 5.8 3.2 C6.8 3.2 7.4 3.8 7.4 4.5 C7.4 5.5 6.1 5.6 6.1 6.6" fill="none" stroke="#e8e8e8" stroke-width="1.2"/><rect x="5.4" y="7.4" width="1.3" height="1.3" fill="#e8e8e8"/></svg>
<div class="a" style="left:299px;top:630.10px;width:120px;height:24px;background:#31afd7;border-radius:4px;"></div>
<svg class="a" style="left:334.20px;top:635.70px;" width="12.5" height="12.5" viewBox="0 0 12.5 12.5"><path d="M9.4 10.6 C8.4 11.2 7.3 11.4 6.2 11.4 C3.2 11.4 0.9 9.1 0.9 6.2 C0.9 3.2 3.2 0.9 6.2 0.9 C9.2 0.9 11.4 3 11.4 5.8 C11.4 7.4 10.7 8.6 9.5 8.6 C8.6 8.6 8.3 8 8.3 7.2 V3.6" fill="none" stroke="#fff" stroke-width="1.7"/><circle cx="6.1" cy="6.1" r="2.1" fill="none" stroke="#fff" stroke-width="1.7"/></svg>
<div class="t" style="left:350.00px;top:634.24px;font-size:12px;line-height:16px;color:#fff;">E-mail</div>
<div class="t" style="left:209.00px;width:300px;text-align:center;top:656.69px;font-size:11px;line-height:14px;color:#555;">Rescheduled action</div>
<div class="t" style="left:437.70px;top:637.80px;font-size:15px;line-height:20px;color:#337ab7;">Reminder by email before due date</div>
<svg class="a" style="left:676.30px;top:640.40px;" width="14" height="14" viewBox="0 0 14 14"><rect x="0" y="0" width="3.6" height="3.8" fill="#a5a5a5"/><rect x="0" y="5.2" width="3.6" height="3.6" fill="#a5a5a5"/><rect x="0" y="10.2" width="3.6" height="3.6" fill="#a5a5a5"/><rect x="5" y="0" width="9" height="1.8" fill="#a5a5a5"/><rect x="5" y="4" width="9" height="1.8" fill="#a5a5a5"/><rect x="5" y="8" width="9" height="1.8" fill="#a5a5a5"/><rect x="5" y="11.1" width="9" height="1.8" fill="#a5a5a5"/></svg>
<div class="t" style="left:716.50px;width:200px;text-align:right;top:637.40px;font-size:15px;line-height:20px;color:#333;font-weight:700;">£ 84,445.80</div>
<svg class="a" style="left:935.70px;top:639.60px;" width="14" height="14" viewBox="0 0 14 14"><rect x="0" y="0" width="1.5" height="14" fill="#4cbb3c"/><path d="M1.9 1.2 C4 0 6 1.2 8 1.6 C10 2 11.5 1.2 13.3 0.6 V8 C11.5 8.8 10 9.6 8 9.2 C6 8.8 4 7.6 1.9 8.6 Z" fill="#4cbb3c"/></svg>
<div class="t" style="left:969.30px;top:637.40px;font-size:15px;line-height:20px;color:#337ab7;">1001663</div>
<div class="t" style="left:1114.50px;top:637.40px;font-size:15px;line-height:20px;color:#337ab7;">CHMPANY LTD</div>
<div class="a" style="left:146.2px;top:692.00px;width:12.6px;height:12.6px;border:1px solid #b5b5b5;border-radius:3.5px;background:#fff;"></div>
<div class="t" style="left:179.20px;top:690.90px;font-size:15px;line-height:20px;color:#555;font-weight:700;letter-spacing:-0.2px;">17-11-2025</div>
<svg class="a" style="left:259.20px;top:695.90px;" width="11.6" height="11.6" viewBox="0 0 11.6 11.6"><circle cx="5.8" cy="5.8" r="5.7" fill="#666"/><path d="M4.2 4.6 C4.2 3.7 4.9 3.2 5.8 3.2 C6.8 3.2 7.4 3.8 7.4 4.5 C7.4 5.5 6.1 5.6 6.1 6.6" fill="none" stroke="#e8e8e8" stroke-width="1.2"/><rect x="5.4" y="7.4" width="1.3" height="1.3" fill="#e8e8e8"/></svg>
<div class="a" style="left:299px;top:684.10px;width:120px;height:24px;background:#31afd7;border-radius:4px;"></div>
<svg class="a" style="left:334.20px;top:689.70px;" width="12.5" height="12.5" viewBox="0 0 12.5 12.5"><path d="M9.4 10.6 C8.4 11.2 7.3 11.4 6.2 11.4 C3.2 11.4 0.9 9.1 0.9 6.2 C0.9 3.2 3.2 0.9 6.2 0.9 C9.2 0.9 11.4 3 11.4 5.8 C11.4 7.4 10.7 8.6 9.5 8.6 C8.6 8.6 8.3 8 8.3 7.2 V3.6" fill="none" stroke="#fff" stroke-width="1.7"/><circle cx="6.1" cy="6.1" r="2.1" fill="none" stroke="#fff" stroke-width="1.7"/></svg>
<div class="t" style="left:350.00px;top:688.24px;font-size:12px;line-height:16px;color:#fff;">E-mail</div>
<div class="t" style="left:209.00px;width:300px;text-align:center;top:710.69px;font-size:11px;line-height:14px;color:#555;">Rescheduled action</div>
<div class="t" style="left:437.70px;top:691.40px;font-size:15px;line-height:20px;color:#337ab7;">Reminder by email before due date</div>
<svg class="a" style="left:676.30px;top:694.00px;" width="14" height="14" viewBox="0 0 14 14"><rect x="0" y="0" width="3.6" height="3.8" fill="#a5a5a5"/><rect x="0" y="5.2" width="3.6" height="3.6" fill="#a5a5a5"/><rect x="0" y="10.2" width="3.6" height="3.6" fill="#a5a5a5"/><rect x="5" y="0" width="9" height="1.8" fill="#a5a5a5"/><rect x="5" y="4" width="9" height="1.8" fill="#a5a5a5"/><rect x="5" y="8" width="9" height="1.8" fill="#a5a5a5"/><rect x="5" y="11.1" width="9" height="1.8" fill="#a5a5a5"/></svg>
<div class="t" style="left:716.50px;width:200px;text-align:right;top:691.00px;font-size:15px;line-height:20px;color:#333;font-weight:700;">£ 53,069.94</div>
<svg class="a" style="left:935.70px;top:693.20px;" width="14" height="14" viewBox="0 0 14 14"><rect x="0" y="0" width="1.5" height="14" fill="#2bb3e6"/><path d="M1.9 1.2 C4 0 6 1.2 8 1.6 C10 2 11.5 1.2 13.3 0.6 V8 C11.5 8.8 10 9.6 8 9.2 C6 8.8 4 7.6 1.9 8.6 Z" fill="#2bb3e6"/></svg>
<div class="t" style="left:969.30px;top:691.00px;font-size:15px;line-height:20px;color:#337ab7;">1001401</div>
<div class="t" style="left:1114.50px;top:691.00px;font-size:15px;line-height:20px;color:#337ab7;">BRMPANY LTD</div>
<div class="a" style="left:146.2px;top:746.45px;width:12.6px;height:12.6px;border:1px solid #b5b5b5;border-radius:3.5px;background:#fff;"></div>
<div class="t" style="left:179.20px;top:745.35px;font-size:15px;line-height:20px;color:#555;font-weight:700;letter-spacing:-0.2px;">17-11-2025</div>
<svg class="a" style="left:259.20px;top:750.35px;" width="11.6" height="11.6" viewBox="0 0 11.6 11.6"><circle cx="5.8" cy="5.8" r="5.7" fill="#666"/><path d="M4.2 4.6 C4.2 3.7 4.9 3.2 5.8 3.2 C6.8 3.2 7.4 3.8 7.4 4.5 C7.4 5.5 6.1 5.6 6.1 6.6" fill="none" stroke="#e8e8e8" stroke-width="1.2"/><rect x="5.4" y="7.4" width="1.3" height="1.3" fill="#e8e8e8"/></svg>
<div class="a" style="left:299px;top:737.80px;width:120px;height:24px;background:#31afd7;border-radius:4px;"></div>
<svg class="a" style="left:334.20px;top:743.40px;" width="12.5" height="12.5" viewBox="0 0 12.5 12.5"><path d="M9.4 10.6 C8.4 11.2 7.3 11.4 6.2 11.4 C3.2 11.4 0.9 9.1 0.9 6.2 C0.9 3.2 3.2 0.9 6.2 0.9 C9.2 0.9 11.4 3 11.4 5.8 C11.4 7.4 10.7 8.6 9.5 8.6 C8.6 8.6 8.3 8 8.3 7.2 V3.6" fill="none" stroke="#fff" stroke-width="1.7"/><circle cx="6.1" cy="6.1" r="2.1" fill="none" stroke="#fff" stroke-width="1.7"/></svg>
<div class="t" style="left:350.00px;top:741.94px;font-size:12px;line-height:16px;color:#fff;">E-mail</div>
<div class="t" style="left:209.00px;width:300px;text-align:center;top:765.39px;font-size:11px;line-height:14px;color:#555;">Specific action</div>
<div class="t" style="left:437.70px;top:735.60px;font-size:15px;line-height:20px;color:#337ab7;">Pending dispute</div>
<svg class="a" style="left:549.70px;top:737.80px;" width="14" height="14" viewBox="0 0 14 14"><rect x="0" y="0" width="3.6" height="3.8" fill="#a5a5a5"/><rect x="0" y="5.2" width="3.6" height="3.6" fill="#a5a5a5"/><rect x="0" y="10.2" width="3.6" height="3.6" fill="#a5a5a5"/><rect x="5" y="0" width="9" height="1.8" fill="#a5a5a5"/><rect x="5" y="4" width="9" height="1.8" fill="#a5a5a5"/><rect x="5" y="8" width="9" height="1.8" fill="#a5a5a5"/><rect x="5" y="11.1" width="9" height="1.8" fill="#a5a5a5"/></svg>
<div class="t" style="left:437.70px;top:757.39px;font-size:11px;line-height:14px;color:#555;">Resolver : <b>Olivier Griehser</b> (Credit Manager)</div>
<div class="t" style="left:716.50px;width:200px;text-align:right;top:745.45px;font-size:15px;line-height:20px;color:#333;font-weight:700;">£ 27,318.74</div>
<svg class="a" style="left:935.70px;top:747.65px;" width="14" height="14" viewBox="0 0 14 14"><rect x="0" y="0" width="1.5" height="14" fill="#2bb3e6"/><path d="M1.9 1.2 C4 0 6 1.2 8 1.6 C10 2 11.5 1.2 13.3 0.6 V8 C11.5 8.8 10 9.6 8 9.2 C6 8.8 4 7.6 1.9 8.6 Z" fill="#2bb3e6"/></svg>
<div class="t" style="left:969.30px;top:745.45px;font-size:15px;line-height:20px;color:#337ab7;">1001224</div>
<div class="t" style="left:1114.50px;top:745.45px;font-size:15px;line-height:20px;color:#337ab7;">YOMPANY LTD</div>
<div class="a" style="left:146.2px;top:802.40px;width:12.6px;height:12.6px;border:1px solid #b5b5b5;border-radius:3.5px;background:#fff;"></div>
<div class="t" style="left:179.20px;top:801.30px;font-size:15px;line-height:20px;color:#555;font-weight:700;letter-spacing:-0.2px;">17-11-2025</div>
<svg class="a" style="left:259.20px;top:806.30px;" width="11.6" height="11.6" viewBox="0 0 11.6 11.6"><circle cx="5.8" cy="5.8" r="5.7" fill="#666"/><path d="M4.2 4.6 C4.2 3.7 4.9 3.2 5.8 3.2 C6.8 3.2 7.4 3.8 7.4 4.5 C7.4 5.5 6.1 5.6 6.1 6.6" fill="none" stroke="#e8e8e8" stroke-width="1.2"/><rect x="5.4" y="7.4" width="1.3" height="1.3" fill="#e8e8e8"/></svg>
<div class="a" style="left:299px;top:793.50px;width:120px;height:24px;background:#31afd7;border-radius:4px;"></div>
<svg class="a" style="left:334.20px;top:799.10px;" width="12.5" height="12.5" viewBox="0 0 12.5 12.5"><path d="M9.4 10.6 C8.4 11.2 7.3 11.4 6.2 11.4 C3.2 11.4 0.9 9.1 0.9 6.2 C0.9 3.2 3.2 0.9 6.2 0.9 C9.2 0.9 11.4 3 11.4 5.8 C11.4 7.4 10.7 8.6 9.5 8.6 C8.6 8.6 8.3 8 8.3 7.2 V3.6" fill="none" stroke="#fff" stroke-width="1.7"/><circle cx="6.1" cy="6.1" r="2.1" fill="none" stroke="#fff" stroke-width="1.7"/></svg>
<div class="t" style="left:350.00px;top:797.64px;font-size:12px;line-height:16px;color:#fff;">E-mail</div>
<div class="t" style="left:209.00px;width:300px;text-align:center;top:821.09px;font-size:11px;line-height:14px;color:#555;">Specific action</div>
<div class="t" style="left:437.70px;top:791.30px;font-size:15px;line-height:20px;color:#337ab7;">Pending dispute</div>
<svg class="a" style="left:549.70px;top:793.50px;" width="14" height="14" viewBox="0 0 14 14"><rect x="0" y="0" width="3.6" height="3.8" fill="#a5a5a5"/><rect x="0" y="5.2" width="3.6" height="3.6" fill="#a5a5a5"/><rect x="0" y="10.2" width="3.6" height="3.6" fill="#a5a5a5"/><rect x="5" y="0" width="9" height="1.8" fill="#a5a5a5"/><rect x="5" y="4" width="9" height="1.8" fill="#a5a5a5"/><rect x="5" y="8" width="9" height="1.8" fill="#a5a5a5"/><rect x="5" y="11.1" width="9" height="1.8" fill="#a5a5a5"/></svg>
<div class="t" style="left:437.70px;top:813.09px;font-size:11px;line-height:14px;color:#555;">Resolver : <b>Audrey Frasca</b> (Credit Manager)</div>
<div class="t" style="left:716.50px;width:200px;text-align:right;top:801.40px;font-size:15px;line-height:20px;color:#333;font-weight:700;">£ 9,687.60</div>
<svg class="a" style="left:935.70px;top:803.60px;" width="14" height="14" viewBox="0 0 14 14"><rect x="0" y="0" width="1.5" height="14" fill="#2bb3e6"/><path d="M1.9 1.2 C4 0 6 1.2 8 1.6 C10 2 11.5 1.2 13.3 0.6 V8 C11.5 8.8 10 9.6 8 9.2 C6 8.8 4 7.6 1.9 8.6 Z" fill="#2bb3e6"/></svg>
<div class="t" style="left:969.30px;top:801.40px;font-size:15px;line-height:20px;color:#337ab7;">108002</div>
<div class="t" style="left:1114.50px;top:801.40px;font-size:15px;line-height:20px;color:#337ab7;">BLMPANY LTD</div>
<div class="a" style="left:146.2px;top:857.30px;width:12.6px;height:12.6px;border:1px solid #b5b5b5;border-radius:3.5px;background:#fff;"></div>
<div class="t" style="left:179.20px;top:856.20px;font-size:15px;line-height:20px;color:#555;font-weight:700;letter-spacing:-0.2px;">17-11-2025</div>
<svg class="a" style="left:259.20px;top:861.20px;" width="11.6" height="11.6" viewBox="0 0 11.6 11.6"><circle cx="5.8" cy="5.8" r="5.7" fill="#666"/><path d="M4.2 4.6 C4.2 3.7 4.9 3.2 5.8 3.2 C6.8 3.2 7.4 3.8 7.4 4.5 C7.4 5.5 6.1 5.6 6.1 6.6" fill="none" stroke="#e8e8e8" stroke-width="1.2"/><rect x="5.4" y="7.4" width="1.3" height="1.3" fill="#e8e8e8"/></svg>
<div class="a" style="left:299px;top:849.20px;width:120px;height:24px;background:#31afd7;border-radius:4px;"></div>
<svg class="a" style="left:334.20px;top:854.80px;" width="12.5" height="12.5" viewBox="0 0 12.5 12.5"><path d="M9.4 10.6 C8.4 11.2 7.3 11.4 6.2 11.4 C3.2 11.4 0.9 9.1 0.9 6.2 C0.9 3.2 3.2 0.9 6.2 0.9 C9.2 0.9 11.4 3 11.4 5.8 C11.4 7.4 10.7 8.6 9.5 8.6 C8.6 8.6 8.3 8 8.3 7.2 V3.6" fill="none" stroke="#fff" stroke-width="1.7"/><circle cx="6.1" cy="6.1" r="2.1" fill="none" stroke="#fff" stroke-width="1.7"/></svg>
<div class="t" style="left:350.00px;top:853.34px;font-size:12px;line-height:16px;color:#fff;">E-mail</div>
<div class="t" style="left:209.00px;width:300px;text-align:center;top:875.79px;font-size:11px;line-height:14px;color:#555;">Rescheduled action</div>
<div class="t" style="left:437.70px;top:856.70px;font-size:15px;line-height:20px;color:#337ab7;">Reminder by email before due date</div>
<svg class="a" style="left:676.30px;top:859.30px;" width="14" height="14" viewBox="0 0 14 14"><rect x="0" y="0" width="3.6" height="3.8" fill="#a5a5a5"/><rect x="0" y="5.2" width="3.6" height="3.6" fill="#a5a5a5"/><rect x="0" y="10.2" width="3.6" height="3.6" fill="#a5a5a5"/><rect x="5" y="0" width="9" height="1.8" fill="#a5a5a5"/><rect x="5" y="4" width="9" height="1.8" fill="#a5a5a5"/><rect x="5" y="8" width="9" height="1.8" fill="#a5a5a5"/><rect x="5" y="11.1" width="9" height="1.8" fill="#a5a5a5"/></svg>
<div class="t" style="left:716.50px;width:200px;text-align:right;top:856.30px;font-size:15px;line-height:20px;color:#333;font-weight:700;">£ 38,209.20</div>
<svg class="a" style="left:935.70px;top:858.50px;" width="14" height="14" viewBox="0 0 14 14"><rect x="0" y="0" width="1.5" height="14" fill="#f7941d"/><path d="M1.9 1.2 C4 0 6 1.2 8 1.6 C10 2 11.5 1.2 13.3 0.6 V8 C11.5 8.8 10 9.6 8 9.2 C6 8.8 4 7.6 1.9 8.6 Z" fill="#f7941d"/></svg>
<div class="t" style="left:969.30px;top:856.30px;font-size:15px;line-height:20px;color:#337ab7;">1001459</div>
<div class="t" style="left:1114.50px;top:856.30px;font-size:15px;line-height:20px;color:#337ab7;">THMPANY LTD</div>
<svg class="a" style="left:1112.00px;top:875.00px;" width="20" height="20" viewBox="0 0 20 20"><circle cx="10" cy="10" r="7" fill="none" stroke="#d6e6f0" stroke-width="2.6"/><path d="M10 3 A7 7 0 0 1 10 17 A7 7 0 0 1 4 13.6" fill="none" stroke="#2f8ad8" stroke-width="2.6"/></svg>
<div class="a" style="left:1526.00px;top:123.00px;width:18.00px;height:40.00px;background:#6b8eb0;"></div>
<svg class="a" style="left:1520.00px;top:132.00px;" width="20" height="26" viewBox="0 0 20 26"><path d="M17 3.5 L6 13.5 L17 23" fill="none" stroke="#e4e9ee" stroke-width="4.2" stroke-linecap="round" stroke-linejoin="round"/></svg>
<div class="a" style="left:1130px;top:113.6px;width:400px;height:771.7px;background:#fff;border-radius:9px;box-shadow:0 0 14px 3px rgba(0,0,0,0.13);"></div>
<svg class="a" style="left:1140.00px;top:120.00px;" width="45" height="48" viewBox="0 0 45 48"><path d="M37.6 9.6 A20.1 20.1 0 1 0 13.8 42.4" fill="none" stroke="#1f86b8" stroke-width="1.8" stroke-linecap="round"/><path d="M25.8 8.4 A17.6 17.6 0 0 0 25.8 43.6" fill="none" stroke="#8dc63f" stroke-width="1.8" stroke-linecap="round"/><path d="M16.3 15.2 A14.6 14.6 0 1 0 37.7 35" fill="none" stroke="#b5b5b5" stroke-width="1.8" stroke-linecap="round"/><path d="M24.9 18.6 Q26.5 25.599999999999998 33.9 27.2 Q26.5 28.8 24.9 35.8 Q23.299999999999997 28.8 15.899999999999999 27.2 Q23.299999999999997 25.599999999999998 24.9 18.6Z" fill="#1f86b8"/><path d="M33.4 12.7 Q34.4 16.5 38.5 17.5 Q34.4 18.5 33.4 22.3 Q32.4 18.5 28.299999999999997 17.5 Q32.4 16.5 33.4 12.7Z" fill="#1f86b8"/></svg>
<div class="t" style="left:1186.80px;top:129.34px;font-size:27px;line-height:35px;color:#1d1d1d;letter-spacing:-0.5px;">MAIA</div>
<div class="t" style="left:1258.90px;top:145.03px;font-size:10px;line-height:13px;color:#222;">Chatbot</div>
<svg class="a" style="left:1495.50px;top:137.50px;" width="16" height="16" viewBox="0 0 16 16"><path d="M1 1 L15 15 M15 1 L1 15" stroke="#7a7a7a" stroke-width="1.6"/></svg>
<div class="a" style="left:1130.00px;top:178.00px;width:400.00px;height:1.20px;background:#e2e2e2;"></div>
<div class="a" style="left:1497.00px;top:179.20px;width:1.50px;height:1.20px;background:#aaa;"></div>
<div class="a" style="left:1503.00px;top:179.20px;width:3.50px;height:1.20px;background:#aaa;"></div>
<div class="a" style="left:1509.00px;top:179.20px;width:5.00px;height:1.20px;background:#aaa;"></div>
<div class="a" style="left:1219.4px;top:186.2px;width:295.2px;height:64.6px;background:#e8f2fc;border-radius:10px 10px 0 10px;"></div>
<div class="t" style="left:1234.50px;top:197.70px;font-size:15px;line-height:20px;color:#2b2b2b;">What are the most important manual</div>
<div class="t" style="left:1234.50px;top:220.10px;font-size:15px;line-height:20px;color:#2b2b2b;">actions?</div>
<div class="t" style="left:1145.50px;top:263.37px;font-size:12.5px;line-height:16px;color:#a9a9a9;">MAIA</div>
<div class="a" style="left:1524.80px;top:260.00px;width:2.60px;height:170.00px;background:#7a7a7a;"></div>
<div class="a" style="left:1145px;top:282px;width:296px;height:524.2px;background:#f5f6f8;border-radius:10px 10px 0 0;"></div>
<div class="t" style="left:1160.20px;top:293.30px;font-size:15px;line-height:20px;color:#1e1e1e;">The most important manual actions in</div>
<div class="t" style="left:1160.20px;top:315.80px;font-size:15px;line-height:20px;color:#1e1e1e;">My DSO Manager include:</div>
<div class="t" style="left:1173.60px;top:353.10px;font-size:15px;line-height:20px;color:#1e1e1e;">1.</div>
<div class="t" style="left:1190.30px;top:353.10px;font-size:15px;line-height:20px;color:#1e1e1e;"><b>Manual Collection Actions</b>:</div>
<div class="t" style="left:1190.30px;top:375.66px;font-size:15px;line-height:20px;color:#1e1e1e;">These are actions that you perform</div>
<div class="t" style="left:1190.30px;top:398.22px;font-size:15px;line-height:20px;color:#1e1e1e;">manually to follow up with</div>
<div class="t" style="left:1190.30px;top:420.78px;font-size:15px;line-height:20px;color:#1e1e1e;">customers, such as sending</div>
<div class="t" style="left:1190.30px;top:443.34px;font-size:15px;line-height:20px;color:#1e1e1e;">emails, making phone calls, or</div>
<div class="t" style="left:1190.30px;top:465.90px;font-size:15px;line-height:20px;color:#1e1e1e;">creating specific actions for</div>
<div class="t" style="left:1190.30px;top:488.46px;font-size:15px;line-height:20px;color:#1e1e1e;">disputed invoices. These actions</div>
<div class="t" style="left:1190.30px;top:511.02px;font-size:15px;line-height:20px;color:#1e1e1e;">are recorded in the "Collection" tab</div>
<div class="t" style="left:1190.30px;top:533.58px;font-size:15px;line-height:20px;color:#1e1e1e;">and help track your efforts to</div>
<div class="t" style="left:1190.30px;top:556.14px;font-size:15px;line-height:20px;color:#1e1e1e;">collect overdue payments.</div>
<div class="t" style="left:1173.60px;top:593.80px;font-size:15px;line-height:20px;color:#1e1e1e;">2.</div>
<div class="t" style="left:1190.30px;top:593.80px;font-size:15px;line-height:20px;color:#1e1e1e;"><b>Qualifying Items with Status</b>: You</div>
<div class="t" style="left:1190.30px;top:616.36px;font-size:15px;line-height:20px;color:#1e1e1e;">can manually qualify open items</div>
<div class="t" style="left:1190.30px;top:638.92px;font-size:15px;line-height:20px;color:#1e1e1e;">(invoices, credit notes, etc.) with</div>
<div class="t" style="left:1190.30px;top:661.48px;font-size:15px;line-height:20px;color:#1e1e1e;">specific statuses such as "Promise</div>
<div class="t" style="left:1190.30px;top:684.04px;font-size:15px;line-height:20px;color:#1e1e1e;">of Payment," "Dispute," or</div>
<div class="t" style="left:1190.30px;top:706.60px;font-size:15px;line-height:20px;color:#1e1e1e;">"Resolved." This helps in tracking</div>
<div class="t" style="left:1190.30px;top:729.16px;font-size:15px;line-height:20px;color:#1e1e1e;">the status of each item and</div>
<div class="t" style="left:1190.30px;top:751.72px;font-size:15px;line-height:20px;color:#1e1e1e;">improves the accuracy of your</div>
<div class="t" style="left:1190.30px;top:774.28px;font-size:15px;line-height:20px;color:#1e1e1e;">receivables.</div>
<div class="a" style="left:1144.70px;top:806.00px;width:370.60px;height:1.20px;background:#e0e0e0;"></div>
<div class="t" style="left:1146.00px;top:820.50px;font-size:15px;line-height:20px;color:#b9b9b9;font-style:italic;">Write here ...</div>
<div class="a" style="left:1145.00px;top:822.00px;width:1.20px;height:16.50px;background:#222;"></div>
<svg class="a" style="left:1485.00px;top:825.00px;" width="40" height="35" viewBox="0 0 40 35"><path d="M30.1 8 L8.2 18.4 L13.3 20.5 L23.6 14.2 Z" fill="#b5b5b5"/><path d="M30.1 8 L24.8 14.3 L14.9 21.3 L15.2 26.8 L19.5 23 L27.5 26.6 Z" fill="#b5b5b5"/></svg>
<!--BODY-->
</body></html>
